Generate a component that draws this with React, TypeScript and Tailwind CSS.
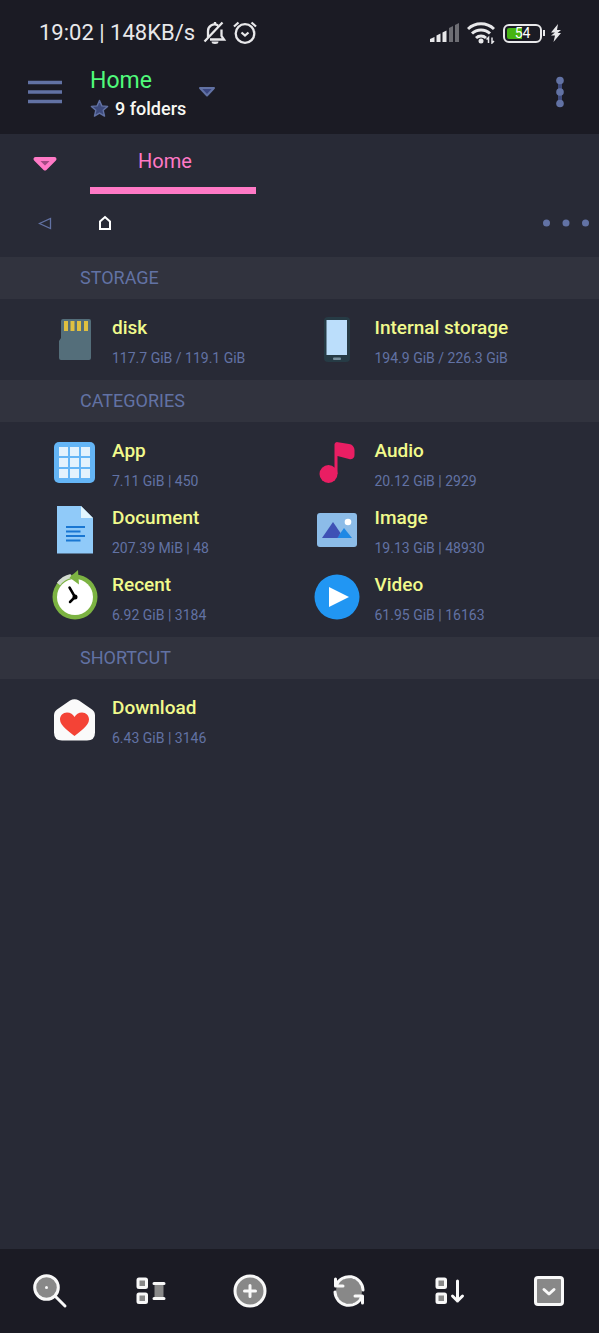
import type { ReactNode } from "react";

type Item = {
  name: string;
  info: string;
  icon: ReactNode;
};

type Section = {
  title: string;
  items: Item[];
};

const SdCardIcon = () => (
  <svg viewBox="0 0 48 48" className="size-12" aria-hidden="true">
    <path d="M12 3h26a2 2 0 0 1 2 2v37a2 2 0 0 1-2 2H10a2 2 0 0 1-2-2V25l2-3V5a2 2 0 0 1 2-2z" fill="#546e7a" />
    <path d="M13 5h4v10h-4zM19.500 5h4v10h-4zM26 5h4v10h-4zM33 5h4v10h-4z" fill="#e0c040" />
  </svg>
);

const PhoneIcon = () => (
  <svg viewBox="0 0 48 48" className="size-12" aria-hidden="true">
    <rect x="11" y="1" width="26" height="45" rx="4" fill="#263b45" />
    <rect x="13.500" y="4" width="20.500" height="35" fill="#bbdefb" />
    <rect x="20" y="41.500" width="8" height="2.500" rx="1" fill="#78909c" />
  </svg>
);

const AppIcon = () => (
  <svg viewBox="0 0 48 48" className="size-12" aria-hidden="true">
    <rect x="3" y="3" width="41" height="41" rx="5" fill="#64b5f6" />
    <path
      d="M8 8h9v9H8zM19 8h9v9h-9zM30 8h9v9h-9zM8 19h9v9H8zM19 19h9v9h-9zM30 19h9v9h-9zM8 30h9v9H8zM19 30h9v9h-9zM30 30h9v9h-9z"
      fill="#e3f2fd"
    />
  </svg>
);

const AudioIcon = () => (
  <svg viewBox="0 0 48 48" className="size-12" aria-hidden="true">
    <circle cx="15.500" cy="35" r="9" fill="#e91e63" />
    <path d="M21.500 35V5.500a2.500 2.500 0 0 1 3.500-2.300l11 1.800a6 6 0 0 1 5.500 6v5a4 4 0 0 1-5.500 4L24.500 17v18z" fill="#e91e63" />
  </svg>
);

const DocumentIcon = () => (
  <svg viewBox="0 0 48 48" className="size-12" aria-hidden="true">
    <path d="M6 0h24l12 12v35.500H6z" fill="#90caf9" />
    <path d="M30 0l12 12H30z" fill="#e1f5fe" />
    <path d="M15 21h19M15 25.500h14.500M15 30h19M15 34.500h14.500" stroke="#1976d2" strokeWidth="2" />
  </svg>
);

const ImageIcon = () => (
  <svg viewBox="0 0 48 48" className="size-12" aria-hidden="true">
    <rect x="4" y="7" width="40" height="34" rx="3" fill="#8cbce8" />
    <circle cx="35" cy="16" r="3.300" fill="#fff" />
    <path d="M24 32l7-10 8 10z" fill="#1e88e5" />
    <path d="M9 32l11-16 7.500 11-3 5z" fill="#3f51b5" />
  </svg>
);

const RecentIcon = () => (
  <svg viewBox="0 0 48 48" className="size-12 overflow-visible" aria-hidden="true">
    <circle cx="24" cy="24" r="22.500" fill="#7cb342" />
    <circle cx="24" cy="24" r="18" fill="#fff" />
    <path d="M7.500 11A21 21 0 0 1 20 3" fill="none" stroke="#d3dbd0" strokeWidth="4" />
    <path d="M27-3L18.500 4.500l9.500 7z" fill="#7cb342" />
    <path d="M18.500 14.500L24 24l-5 5" fill="none" stroke="#000" strokeWidth="2.500" strokeLinecap="round" />
    <circle cx="24" cy="24" r="2.500" />
  </svg>
);

const VideoIcon = () => (
  <svg viewBox="0 0 48 48" className="size-12" aria-hidden="true">
    <circle cx="24" cy="24" r="22.500" fill="#2196f3" />
    <path d="M16 14l20 10-20 10z" fill="#fff" />
  </svg>
);

const DownloadIcon = () => (
  <svg viewBox="0 0 48 48" className="size-12" aria-hidden="true">
    <path
      d="M19 4.500q4.500-2.500 9 0l13 9q3 2 3 6v17q0 8-8 8H11q-8 0-8-8V19.500q0-4 3-6z"
      fill="#fafafa"
    />
    <path
      d="M23.500 40C19 36 9 30 9 23.500c0-4 3-7 7-7 3.500 0 6 2 7.500 4.500 1.500-2.500 4-4.500 7.500-4.500 4 0 7 3 7 7C38 30 28 36 23.500 40z"
      fill="#f44336"
    />
  </svg>
);

const sections: Section[] = [
  {
    title: "STORAGE",
    items: [
      { name: "disk", info: "117.7 GiB / 119.1 GiB", icon: <SdCardIcon /> },
      { name: "Internal storage", info: "194.9 GiB / 226.3 GiB", icon: <PhoneIcon /> },
    ],
  },
  {
    title: "CATEGORIES",
    items: [
      { name: "App", info: "7.11 GiB | 450", icon: <AppIcon /> },
      { name: "Audio", info: "20.12 GiB | 2929", icon: <AudioIcon /> },
      { name: "Document", info: "207.39 MiB | 48", icon: <DocumentIcon /> },
      { name: "Image", info: "19.13 GiB | 48930", icon: <ImageIcon /> },
      { name: "Recent", info: "6.92 GiB | 3184", icon: <RecentIcon /> },
      { name: "Video", info: "61.95 GiB | 16163", icon: <VideoIcon /> },
    ],
  },
  {
    title: "SHORTCUT",
    items: [{ name: "Download", info: "6.43 GiB | 3146", icon: <DownloadIcon /> }],
  },
];

const StatusBar = () => (
  <div className="flex h-[58px] items-center justify-between pt-2 pr-[37px] pl-[39px] text-[#e8e8ea]">
    <div className="flex items-center">
      <span className="text-[22px] leading-7">19:02 | 148KB/s</span>
      {/* muted bell */}
      <svg viewBox="0 0 24 24" className="ml-2 size-6" fill="none" stroke="currentColor" strokeWidth="2.300" aria-hidden="true">
        <path d="M5 16.500V10a6.500 6.500 0 0 1 10-5.500M18.500 8.500V15l2.500 3.500H7M1.500 20.500L19.500 1.500" />
        <path d="M12 1v2" />
        <path d="M8.500 20.500h7a3.500 2.500 0 0 1-7 0z" fill="currentColor" stroke="none" />
      </svg>
      {/* alarm */}
      <svg viewBox="0 0 24 24" className="ml-[6px] size-6" fill="none" stroke="currentColor" strokeWidth="2.300" aria-hidden="true">
        <circle cx="12" cy="12.500" r="9.300" />
        <path d="M8.500 11.500l3.500 3 3.500-3M1 5.500l4.500-4M23 5.500l-4.500-4" />
      </svg>
    </div>
    <div className="flex items-center">
      <svg viewBox="0 0 30 20" className="h-5 w-[30px]" fill="currentColor" aria-hidden="true">
        <path d="M0 19v-3l4.500-2v5zM6.500 19v-6.500l4-2V19zM12.500 19V9.500l4-2V19z" />
        <path d="M19 19V5l4-2v16zM25 19V2l4-2v19z" opacity=".4" />
      </svg>
      <svg viewBox="0 0 28 22" className="ml-[7px] h-[22px] w-7" fill="none" stroke="currentColor" strokeWidth="3" aria-hidden="true">
        <path d="M1 7a19 19 0 0 1 26 0M5 11.500a13 13 0 0 1 18 0M9 16a7.500 7.500 0 0 1 10 0" />
        <circle cx="14" cy="19" r="2.500" fill="currentColor" stroke="none" />
        <path d="M21.500 21v-5.500l-2 2M25 15.500V21l2-2" strokeWidth="1.500" />
      </svg>
      <div className="ml-2 flex h-[19px] w-[39px] items-center rounded-md border-2 border-current bg-linear-to-r from-[#46b413] from-50% to-transparent to-50% bg-clip-content p-[2px]">
        <span className="w-full text-center text-sm leading-4 text-white">54</span>
      </div>
      <div className="ml-px h-[6px] w-[2px] bg-current" />
      <svg viewBox="0 0 12 20" className="ml-[5px] h-5 w-3" fill="currentColor" aria-hidden="true">
        <path d="M8 1L1 9.500h4L1 12.500h4L3.500 19l7.500-9H7.500L11 7H7z" />
      </svg>
    </div>
  </div>
);

const Header = () => (
  <header className="bg-[#1b1b24]">
    <StatusBar />
    <div className="flex h-[76px] items-start">
      <button type="button" aria-label="Menu" className="flex h-[68px] w-[90px] items-center justify-center">
        <svg viewBox="0 0 34 24" className="h-6 w-[34px]" stroke="#6272a4" strokeWidth="3.500" aria-hidden="true">
          <path d="M0 2.500h34M0 12h34M0 21.500h34" />
        </svg>
      </button>
      <button type="button" className="flex h-[68px] items-center text-left">
        <span className="flex flex-col pt-[5px]">
          <span className="text-[23px] leading-7 text-[#50fa7b]">Home</span>
          <span className="flex items-center gap-[6px] text-lg leading-7 font-medium text-[#f8f8f2]">
            <svg viewBox="0 0 20 20" className="size-[19px]" aria-hidden="true">
              <path
                d="M10 1.500l2.500 5.700 6 .6-4.600 4.100 1.400 6.100L10 14.800 4.700 18l1.400-6.100L1.500 7.800l6-.6z"
                fill="#3d4a7c"
                stroke="#6272a4"
                strokeWidth="1.500"
                strokeLinejoin="round"
              />
            </svg>
            9 folders
          </span>
        </span>
        <svg viewBox="0 0 18 12" className="ml-3 h-3 w-[18px]" aria-hidden="true">
          <path d="M2 2h14L9 9.500z" fill="#3a4680" stroke="#6272a4" strokeWidth="2" strokeLinejoin="round" />
        </svg>
      </button>
      <button type="button" aria-label="More options" className="ml-auto flex h-[68px] w-[78px] items-center justify-center">
        <svg viewBox="0 0 10 32" className="h-8 w-[10px]" fill="#6272a4" aria-hidden="true">
          <path d="M5 4v24" stroke="#3f4b7d" strokeWidth="4" />
          <circle cx="5" cy="4.500" r="3.800" />
          <circle cx="5" cy="16" r="3.800" />
          <circle cx="5" cy="27.500" r="3.800" />
        </svg>
      </button>
    </div>
  </header>
);

const TabBar = () => (
  <div className="flex h-[60px]">
    <button type="button" aria-label="Tab list" className="flex w-[90px] items-center justify-center">
      <svg viewBox="0 0 26 16" className="h-4 w-[26px]" aria-hidden="true">
        <path d="M3.500 3h19L13 12.500z" fill="#a34a83" stroke="#ff79c6" strokeWidth="4" strokeLinejoin="round" />
      </svg>
    </button>
    <button
      type="button"
      aria-current="page"
      className="w-[166px] border-b-[7px] border-[#ff79c6] pr-4 text-xl leading-7 text-[#ff79c6]"
    >
      Home
    </button>
  </div>
);

const Breadcrumb = () => (
  <div className="flex h-[63px] items-center pb-[6px]">
    <button type="button" aria-label="Back" className="flex w-[90px] justify-center">
      <svg viewBox="0 0 14 14" className="size-[14px]" aria-hidden="true">
        <path d="M12.500 2.500v10L1.500 7.500z" fill="none" stroke="#6272a4" strokeWidth="1.300" />
      </svg>
    </button>
    <button type="button" aria-label="Home folder" className="pl-2">
      <svg viewBox="0 0 14 16" className="h-4 w-[14px]" aria-hidden="true">
        <path d="M2 14V6.500l5-4.500 5 4.500V14z" fill="none" stroke="#fff" strokeWidth="2" />
      </svg>
    </button>
    <button type="button" aria-label="Path options" className="ml-auto pr-[9px]">
      <svg viewBox="0 0 48 8" className="h-2 w-12" fill="#6272a4" aria-hidden="true">
        <circle cx="4.500" cy="4" r="3.500" />
        <circle cx="24" cy="4" r="3.500" />
        <circle cx="43.500" cy="4" r="3.500" />
      </svg>
    </button>
  </div>
);

const ItemRow = ({ name, info, icon }: Item) => (
  <button type="button" className="flex h-[67px] items-center text-left">
    <span className="flex w-[75px] shrink-0 justify-center">{icon}</span>
    <span className="flex flex-col gap-1 pt-[5px]">
      <span className="text-[19px] leading-7 font-medium text-[#f1fa8c]">{name}</span>
      <span className="text-sm leading-6 text-[#6272a4]">{info}</span>
    </span>
  </button>
);

const NavIcon = ({ children }: { children: ReactNode }) => (
  <svg
    viewBox="0 0 36 36"
    className="size-9"
    fill="none"
    stroke="#f8f8f8"
    strokeWidth="3"
    strokeLinecap="round"
    strokeLinejoin="round"
    aria-hidden="true"
  >
    {children}
  </svg>
);

const navItems = [
  {
    label: "Search",
    icon: (
      <NavIcon>
        <circle cx="14.500" cy="14.500" r="11.800" fill="#888" />
        <path d="M24 24l9 9" />
        <circle cx="14.500" cy="14.500" r="1.500" fill="#f8f8f8" stroke="none" />
      </NavIcon>
    ),
  },
  {
    label: "View",
    icon: (
      <NavIcon>
        <rect x="6" y="6" width="8.500" height="8.500" rx="1" fill="#888" />
        <rect x="6" y="21" width="8.500" height="8.500" rx="1" fill="#888" />
        <path d="M22.500 11h9v14h-9z" fill="#888" stroke="none" />
        <path d="M22 10.500h10M22 25.500h10" />
      </NavIcon>
    ),
  },
  {
    label: "Add",
    icon: (
      <NavIcon>
        <circle cx="18" cy="18" r="15" fill="#888" />
        <path d="M18 12.500v11M12.500 18h11" />
      </NavIcon>
    ),
  },
  {
    label: "Refresh",
    icon: (
      <NavIcon>
        <circle cx="18" cy="18" r="13" fill="#888" stroke="none" />
        <path d="M32 17A14 14 0 0 0 5 12.500M4.500 6v7H12M4 19a14 14 0 0 0 27 4.500M31.500 30v-7H24" />
      </NavIcon>
    ),
  },
  {
    label: "Sort",
    icon: (
      <NavIcon>
        <rect x="6" y="6" width="8.500" height="8.500" rx="1" fill="#888" />
        <rect x="6" y="21" width="8.500" height="8.500" rx="1" fill="#888" />
        <path d="M26.500 8v20M21.500 23l5 5 5-5" />
      </NavIcon>
    ),
  },
  {
    label: "Select",
    icon: (
      <NavIcon>
        <rect x="4.500" y="4.500" width="27" height="27" rx="2.500" fill="#888" />
        <path d="M13 16.500l5 4.500 5-4.500" />
      </NavIcon>
    ),
  },
];

const App = () => {
  return (
    <div className="flex min-h-screen flex-col bg-[#282a36] font-[Roboto,sans-serif]">
      <Header />
      <TabBar />
      <Breadcrumb />

      <main className="flex-1">
        {sections.map((section) => (
          <section key={section.title}>
            <h2 className="bg-[#31333e] pl-20 text-lg leading-[42px] text-[#6272a4]">{section.title}</h2>
            <div className="grid grid-cols-2 px-[37px] py-[7px]">
              {section.items.map((item) => (
                <ItemRow key={item.name} {...item} />
              ))}
            </div>
          </section>
        ))}
      </main>

      <nav className="grid h-[84px] grid-cols-6 bg-[#1b1b24]">
        {navItems.map((item) => (
          <button key={item.label} type="button" aria-label={item.label} className="flex items-center justify-center">
            {item.icon}
          </button>
        ))}
      </nav>
    </div>
  );
};

export default App;
